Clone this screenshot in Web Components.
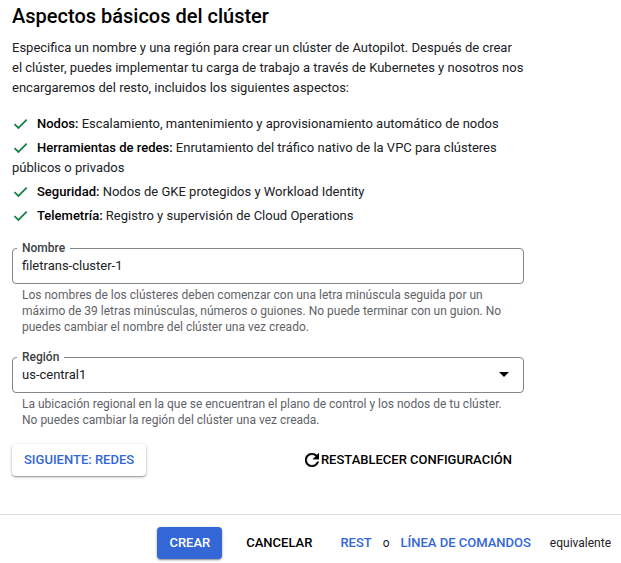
<!DOCTYPE html>
<html lang="es">
<head>
<meta charset="utf-8">
<title>Aspectos básicos del clúster</title>
<style>
  body { margin: 0; background: #fff; color: #202124; font: 400 13px/20px Roboto, "Liberation Sans", sans-serif; }
</style>
</head>
<body>
<cluster-page></cluster-page>

<template id="page-tpl">
  <style>
    :host { display: block; }
    main { max-width: 512px; padding: 4px 12px 0; color: #000; }
    h1 { margin: 0 0 10px; font-size: 20px; line-height: 24px; font-weight: 500; }
    p { margin: 0; color: #202124; }
    ul { list-style: none; margin: 16px 0; padding: 0; display: grid; gap: 4px; }
    .actions { display: flex; justify-content: space-between; align-items: center; margin-top: 16px; }
    .actions svg { margin-right: 2px; }
  </style>
  <main>
    <h1>Aspectos básicos del clúster</h1>
    <p>Especifica un nombre y una región para crear un clúster de Autopilot. Después de crear el clúster, puedes implementar tu carga de trabajo a través de Kubernetes y nosotros nos encargaremos del resto, incluidos los siguientes aspectos:</p>
    <ul>
      <li><check-item><b>Nodos:</b> Escalamiento, mantenimiento y aprovisionamiento automático de nodos</check-item></li>
      <li><check-item><b>Herramientas de redes:</b> Enrutamiento del tráfico nativo de la VPC para clústeres públicos o privados</check-item></li>
      <li><check-item><b>Seguridad:</b> Nodos de GKE protegidos y Workload Identity</check-item></li>
      <li><check-item><b>Telemetría:</b> Registro y supervisión de Cloud Operations</check-item></li>
    </ul>
    <outlined-field label="Nombre" value="filetrans-cluster-1">Los nombres de los clústeres deben comenzar con una letra minúscula seguida por un máximo de 39 letras minúsculas, números o guiones. No puede terminar con un guion. No puedes cambiar el nombre del clúster una vez creado.</outlined-field>
    <outlined-field label="Región" value="us-central1" kind="select">La ubicación regional en la que se encuentran el plano de control y los nodos de tu clúster. No puedes cambiar la región del clúster una vez creada.</outlined-field>
    <div class="actions">
      <action-button variant="raised">SIGUIENTE: REDES</action-button>
      <action-button variant="text">
        <svg slot="icon" width="14" height="14" viewBox="4 4 16 16" aria-hidden="true"><path d="M17.650 6.350A7.958 7.958 0 0 0 12 4c-4.420 0-7.990 3.580-7.990 8s3.570 8 7.990 8c3.730 0 6.840-2.550 7.730-6h-2.080A5.990 5.990 0 0 1 12 18c-3.310 0-6-2.690-6-6s2.690-6 6-6c1.660 0 3.140.690 4.220 1.780L13 11h7V4z" fill="#000" stroke="#000" stroke-width=".4"/></svg>RESTABLECER CONFIGURACIÓN</action-button>
    </div>
  </main>
  <page-footer></page-footer>
</template>

<template id="check-tpl">
  <style>
    :host { display: block; color: #202124; }
    svg { width: 16px; height: 16px; vertical-align: -4px; margin-right: 9px; }
    ::slotted(b) { font-weight: 500; color: #000; }
  </style>
  <svg viewBox="0 0 16 16" aria-hidden="true"><path d="M2.500 8.200l3.900 3.800 8.300-8.300" fill="none" stroke="#188049" stroke-width="1.800"/></svg><slot></slot>
</template>

<template id="field-tpl">
  <style>
    :host { display: block; margin-top: 16px; }
    fieldset { margin: 0; min-width: 0; padding: 0 0 0 4px; border: 1px solid #80868b; border-radius: 4px; }
    legend { padding: 0 5px; font-size: 12px; line-height: 12px; font-weight: 500; }
    label { color: #3c4043; }
    input, select { display: block; box-sizing: border-box; width: 100%; height: 29px; margin: 0; padding: 0 5px 6px; border: 0; outline: 0; background: none; font: inherit; color: #202124; appearance: none; }
    .control { display: flex; align-items: center; }
    svg { flex: none; width: 10px; height: 5px; margin: 0 14px 6px 4px; }
    .hint { padding: 3px 10px 0; font-size: 12px; line-height: 16px; color: #5f6368; }
  </style>
  <fieldset>
    <legend><label for="control"></label></legend>
    <div class="control"></div>
  </fieldset>
  <div class="hint" id="hint"><slot></slot></div>
</template>

<template id="button-tpl">
  <style>
    :host { display: block; }
    button { display: flex; align-items: center; height: 32px; margin: 0; padding: 0 12px; border: 0; border-radius: 4px; background: none; color: #000; font: inherit; font-weight: 500; white-space: nowrap; cursor: pointer; }
    :host([variant="raised"]) button { color: #3367d6; background: #fff; }
    :host([variant="primary"]) button { color: #fff; background: #3367d6; }
    :host([variant="raised"]) button, :host([variant="primary"]) button { box-shadow: 0 1px 3px rgba(0,0,0,.3), 0 1px 1px rgba(0,0,0,.2); }
  </style>
  <button type="button"><slot name="icon"></slot><slot></slot></button>
</template>

<template id="footer-tpl">
  <style>
    :host { display: block; margin-top: 38px; border-top: 1px solid #dadce0; }
    footer { display: flex; justify-content: flex-end; align-items: center; padding: 12px 10px 4px 12px; }
    .equivalent { display: flex; align-items: center; margin-left: 16px; font-size: 12px; white-space: nowrap; }
    a { color: #3367d6; font-size: 13px; font-weight: 500; text-decoration: none; }
    .or { margin: 0 11px; }
    .word { margin-left: 19px; }
    .cancel { margin-left: 12px; }
  </style>
  <footer>
    <action-button variant="primary">CREAR</action-button>
    <action-button class="cancel" variant="text">CANCELAR</action-button>
    <div class="equivalent"><a href="#rest">REST</a><span class="or">o</span><a href="#cli">LÍNEA DE COMANDOS</a><span class="word">equivalente</span></div>
  </footer>
</template>

<script>
  class TemplateElement extends HTMLElement {
    constructor() {
      super();
      const tpl = document.getElementById(this.constructor.template);
      this.attachShadow({ mode: 'open' }).append(document.importNode(tpl.content, true));
    }
  }
  class CheckItem extends TemplateElement { static template = 'check-tpl'; }
  class ActionButton extends TemplateElement { static template = 'button-tpl'; }
  class PageFooter extends TemplateElement { static template = 'footer-tpl'; }
  class ClusterPage extends TemplateElement { static template = 'page-tpl'; }
  class OutlinedField extends TemplateElement {
    static template = 'field-tpl';
    connectedCallback() {
      const box = this.shadowRoot.querySelector('.control');
      if (box.firstChild) return;
      const value = this.getAttribute('value');
      this.shadowRoot.querySelector('label').textContent = this.getAttribute('label');
      let control;
      if (this.getAttribute('kind') === 'select') {
        control = document.createElement('select');
        control.add(new Option(value, value, true, true));
        box.innerHTML = '<svg viewBox="0 0 10 5" aria-hidden="true"><path d="M0 0h10L5 5z"/></svg>';
      } else {
        control = document.createElement('input');
        control.type = 'text';
        control.value = value;
        control.spellcheck = false;
      }
      control.id = 'control';
      control.setAttribute('aria-describedby', 'hint');
      box.prepend(control);
    }
  }
  customElements.define('check-item', CheckItem);
  customElements.define('outlined-field', OutlinedField);
  customElements.define('action-button', ActionButton);
  customElements.define('page-footer', PageFooter);
  customElements.define('cluster-page', ClusterPage);
</script>
</body>
</html>
